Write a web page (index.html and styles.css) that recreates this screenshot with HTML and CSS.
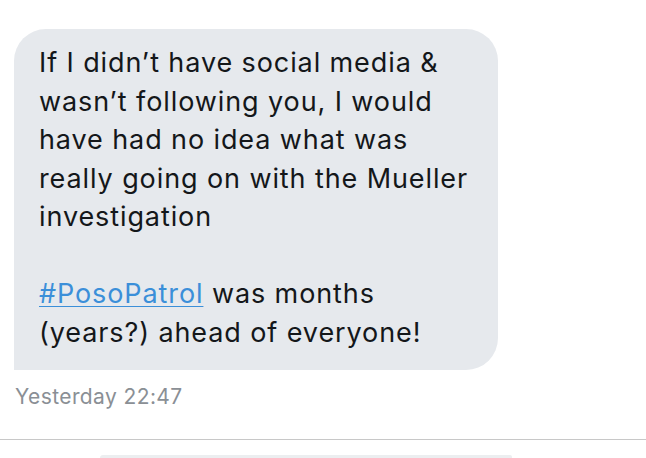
FILE: index.html
```html
<!DOCTYPE html>
<html>
<head>
<meta charset="utf-8">
<link rel="stylesheet" href="styles.css">
</head>
<body>
<div class="thread">
  <div class="bubble">
    <p class="msg">If I didn’t have social media &amp; wasn’t following you, I would have had no idea what was really going on with the Mueller investigation</p>
    <p class="msg gap"><a class="tag" href="#">#PosoPatrol</a> was months (years?) ahead of everyone!</p>
  </div>
  <div class="time">Yesterday 22:47</div>
</div>
<div class="divider"></div>
<div class="next"><div class="next-bubble"></div></div>
</body>
</html>
```
FILE: styles.css
```css
html, body {
  margin: 0;
  padding: 0;
  background: #ffffff;
  overflow: hidden;
}
body {
  width: 646px;
  height: 458px;
  font-family: Inter, "Open Sans", "Liberation Sans", sans-serif;
}
.thread {
  padding: 29px 0 0 14px;
  height: 439px;
  box-sizing: border-box;
}
.bubble {
  width: 484px;
  box-sizing: border-box;
  background: #e6e9ed;
  border-radius: 32px 32px 32px 0;
  padding: 15px 20px 18px 25px;
  color: #14171a;
  font-size: 27px;
  letter-spacing: 0.9px;
  line-height: 38.5px;
}
.msg {
  margin: 0;
}
.msg.gap {
  margin-top: 38.5px;
}
.tag {
  color: #3b8fd9;
  text-decoration: underline;
  text-decoration-thickness: 1px;
  text-underline-offset: 3px;
}
.time {
  margin-top: 12px;
  padding-left: 1px;
  font-size: 21px;
  letter-spacing: 0.4px;
  color: #8a8f95;
  line-height: 30px;
}
.divider {
  height: 1px;
  background: #c8c8c8;
}
.next {
  padding: 15px 0 0 100px;
  height: 18px;
  box-sizing: border-box;
}
.next-bubble {
  width: 412px;
  height: 3px;
  background: #eceef0;
  border-radius: 3px 2px 0 0;
}
```
